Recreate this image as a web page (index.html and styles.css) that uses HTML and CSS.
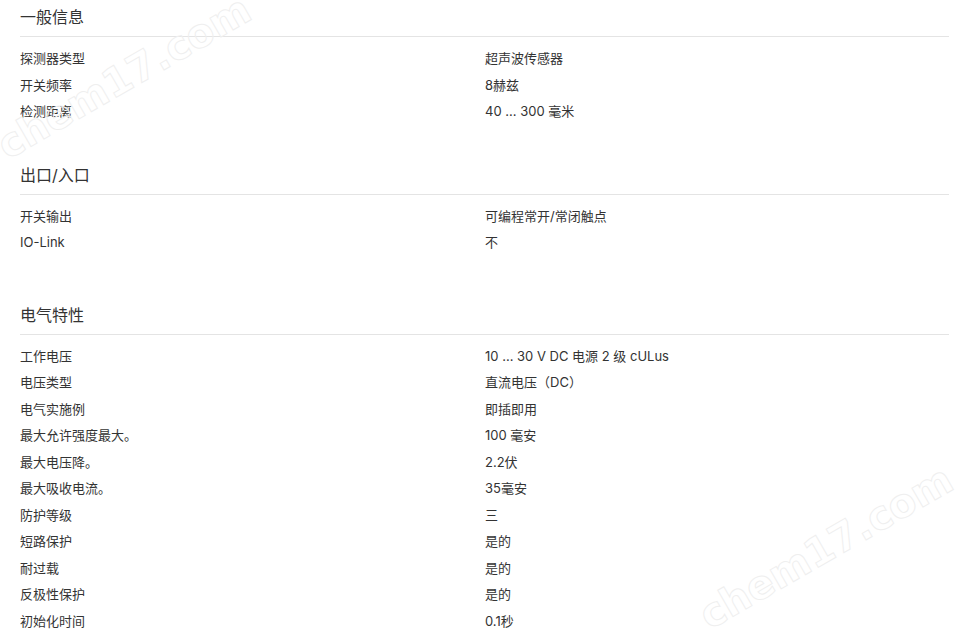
FILE: index.html
```html
<!DOCTYPE html>
<html lang="zh-CN">
<head>
<meta charset="utf-8">
<title>技术参数</title>
<link rel="stylesheet" href="styles.css">
</head>
<body>
<div class="page">
  <section class="spec">
    <h2 class="spec-title">一般信息</h2>
    <dl class="spec-list">
      <dt>探测器类型</dt><dd>超声波传感器</dd>
      <dt>开关频率</dt><dd>8赫兹</dd>
      <dt>检测距离</dt><dd>40 ... 300 毫米</dd>
    </dl>
  </section>
  <section class="spec spec-io">
    <h2 class="spec-title">出口/入口</h2>
    <dl class="spec-list">
      <dt>开关输出</dt><dd>可编程常开/常闭触点</dd>
      <dt>IO-Link</dt><dd>不</dd>
    </dl>
  </section>
  <section class="spec">
    <h2 class="spec-title">电气特性</h2>
    <dl class="spec-list">
      <dt>工作电压</dt><dd>10 ... 30 V DC 电源 2 级 cULus</dd>
      <dt>电压类型</dt><dd>直流电压（DC）</dd>
      <dt>电气实施例</dt><dd>即插即用</dd>
      <dt>最大允许强度最大。</dt><dd>100 毫安</dd>
      <dt>最大电压降。</dt><dd>2.2伏</dd>
      <dt>最大吸收电流。</dt><dd>35毫安</dd>
      <dt>防护等级</dt><dd>三</dd>
      <dt>短路保护</dt><dd>是的</dd>
      <dt>耐过载</dt><dd>是的</dd>
      <dt>反极性保护</dt><dd>是的</dd>
      <dt>初始化时间</dt><dd>0.1秒</dd>
    </dl>
  </section>
  <div class="watermark wm-1" aria-hidden="true">chem17.com</div>
  <div class="watermark wm-2" aria-hidden="true">chem17.com</div>
</div>
</body>
</html>
```

FILE: styles.css
```css
html, body {
  margin: 0;
  padding: 0;
  background: #ffffff;
}
body {
  font-family: Inter, "Noto Sans CJK SC", sans-serif;
  color: #333333;
  overflow: hidden;
}
.page {
  position: relative;
  padding: 5px 13px 0 20px;
  height: 642px;
  box-sizing: border-box;
  overflow: hidden;
}
.spec {
  margin: 0 0 38px 0;
}
.spec-io {
  margin-bottom: 47px;
}
.spec-title {
  margin: 0;
  font-size: 16px;
  font-weight: 400;
  line-height: 24px;
  padding-bottom: 7px;
  border-bottom: 1px solid #e4e4e4;
  color: #333333;
}
.spec-list {
  margin: 0;
  padding-top: 8px;
  display: grid;
  grid-template-columns: 465px 1fr;
  font-size: 13px;
  line-height: 26.5px;
}
.spec-list dt,
.spec-list dd {
  margin: 0;
  white-space: nowrap;
}
.watermark {
  position: absolute;
  font-family: "DejaVu Sans", sans-serif;
  font-weight: 700;
  font-size: 40px;
  line-height: 46px;
  color: transparent;
  -webkit-text-stroke: 1px #efefef;
  transform: rotate(-30deg);
  transform-origin: left bottom;
  white-space: nowrap;
  pointer-events: none;
}
.wm-1 {
  left: 12px;
  top: 122px;
}
.wm-2 {
  left: 714px;
  top: 592px;
}
```
